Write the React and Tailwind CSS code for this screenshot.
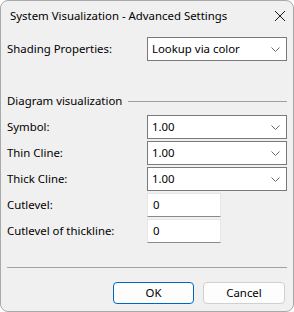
import React from "react";

function Chevron() {
  return (
    <svg width="9" height="5" viewBox="0 0 9 5" className="shrink-0">
      <path d="M0.5 0.5 L4.5 4.5 L8.5 0.5" fill="none" stroke="#6a6a6a" strokeWidth="1" />
    </svg>
  );
}

function Select({ value }) {
  return (
    <div className="w-[140px] h-[24px] bg-white border border-[#7a7a7a] flex items-center justify-between pl-[4px] pr-[6px]">
      <span>{value}</span>
      <Chevron />
    </div>
  );
}

function TextBox({ value }) {
  return (
    <div className="w-[74px] h-[24px] bg-white border border-[#e6e6e6] border-b-[#8a8a8a] flex items-center pl-[5px]">
      <span>{value}</span>
    </div>
  );
}

function Row({ label, children }) {
  return (
    <div className="flex items-center h-[24px]">
      <div className="w-[146px] pl-[6px]">{label}</div>
      {children}
    </div>
  );
}

export default function App() {
  return (
    <div
      className="w-[294px] h-[312px] bg-[#f0f0f0] border border-[#a9a9a9] rounded-[8px] overflow-hidden flex flex-col text-[11.4px] text-black"
      style={{ fontFamily: '"Noto Sans", "Liberation Sans", sans-serif' }}
    >
      <div className="h-[30px] flex items-center justify-between pl-[9px] pr-[6px] shrink-0">
        <span>System Visualization - Advanced Settings</span>
        <svg width="12" height="12" viewBox="0 0 12 12" className="mr-[1px]">
          <path d="M1 1 L11 11 M11 1 L1 11" stroke="#1a1a1a" strokeWidth="1" />
        </svg>
      </div>
      <div className="flex flex-col pt-[6px]">
        <Row label="Shading Properties:">
          <Select value="Lookup via color" />
        </Row>
        <div className="flex items-center h-[14px] mt-[33px] pl-[6px] pr-[6px] gap-[6px]">
          <span className="whitespace-nowrap">Diagram visualization</span>
          <div className="flex-1 h-px bg-[#a0a0a0]" />
        </div>
        <div className="flex flex-col gap-[2px] mt-[7px]">
          <Row label="Symbol:">
            <Select value="1.00" />
          </Row>
          <Row label="Thin Cline:">
            <Select value="1.00" />
          </Row>
          <Row label="Thick Cline:">
            <Select value="1.00" />
          </Row>
          <Row label="Cutlevel:">
            <TextBox value="0" />
          </Row>
          <Row label="Cutlevel of thickline:">
            <TextBox value="0" />
          </Row>
        </div>
        <div className="h-px bg-[#a0a0a0] mx-[6px] mt-[24px]" />
        <div className="flex justify-end gap-[9px] pr-[8px] mt-[14px]">
          <button className="w-[81px] h-[22px] bg-[#fdfdfd] border border-[#0067c0] rounded-[4px] flex items-center justify-center">
            OK
          </button>
          <button className="w-[82px] h-[22px] bg-[#fdfdfd] border border-[#d0d0d0] rounded-[4px] flex items-center justify-center">
            Cancel
          </button>
        </div>
      </div>
    </div>
  );
}
